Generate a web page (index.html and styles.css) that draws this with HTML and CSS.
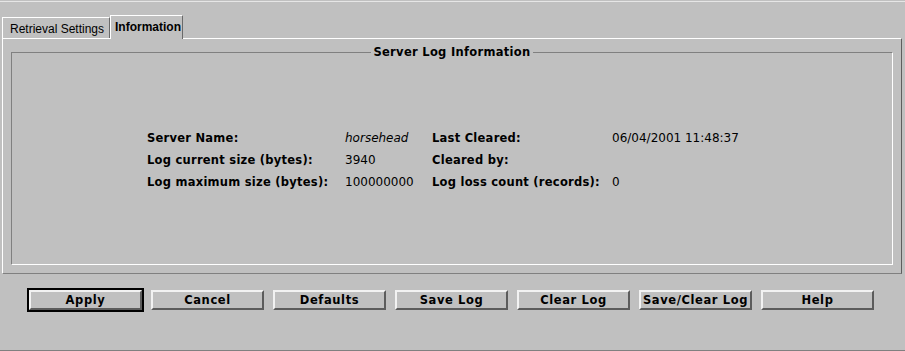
FILE: index.html
```html
<!DOCTYPE html>
<html lang="en">
<head>
  <meta charset="UTF-8" />
  <title>Server Log</title>
  <link rel="stylesheet" href="styles.css">
</head>
<body>
  <div class="window">
    <div class="tabs">
      <div class="tab">Retrieval Settings</div>
      <div class="tab active">Information</div>
    </div>

    <div class="panel">
      <fieldset class="group">
        <legend>Server Log Information</legend>
        <div class="info">
          <span class="label">Server Name:</span>
          <span class="value italic">horsehead</span>
          <span class="label">Last Cleared:</span>
          <span class="value">06/04/2001 11:48:37</span>

          <span class="label">Log current size (bytes):</span>
          <span class="value">3940</span>
          <span class="label">Cleared by:</span>
          <span class="value"></span>

          <span class="label">Log maximum size (bytes):</span>
          <span class="value">100000000</span>
          <span class="label">Log loss count (records):</span>
          <span class="value">0</span>
        </div>
      </fieldset>
    </div>

    <div class="buttons">
      <button class="default">Apply</button>
      <button>Cancel</button>
      <button>Defaults</button>
      <button>Save Log</button>
      <button>Clear Log</button>
      <button>Save/Clear Log</button>
      <button>Help</button>
    </div>
  </div>
</body>
</html>
```

FILE: styles.css
```css
* {
  box-sizing: border-box;
}

body {
  margin: 0;
  background: #c0c0c0;
  font-family: 'DejaVu Sans', Verdana, sans-serif;
  font-size: 12px;
  color: #000;
}

.window {
  width: 905px;
  height: 351px;
  padding-top: 1px;
  display: flex;
  flex-direction: column;
  border-bottom: 1px solid #808080;
}

.window::before {
  content: "";
  display: block;
  height: 1px;
  background: #e6e6e6;
}

.tabs {
  display: flex;
  align-items: flex-end;
  padding: 0 0 0 2px;
  height: 36px;
}

.tab {
  font-family: 'Liberation Sans', Arial, sans-serif;
  font-size: 12px;
  height: 21px;
  padding: 4px 0 0 7px;
  border-top: 1px solid #fff;
  border-left: 1px solid #fff;
  border-right: 1px solid #6a6a6a;
  width: 108px;
}

.tab.active {
  position: relative;
  z-index: 1;
  width: 73px;
  height: 24px;
  margin-bottom: -1px;
  padding: 4px 0 0 4px;
  font-weight: bold;
  background: #c0c0c0;
}

.panel {
  width: 900px;
  height: 236px;
  margin-left: 2px;
  padding: 6px 8px 8px 8px;
  border-top: 1px solid #fff;
  border-left: 1px solid #fff;
  border-right: 1px solid #5e5e5e;
  border-bottom: 1px solid #808080;
}

.group {
  margin: 0;
  height: 220px;
  padding: 68px 0 0 0;
  border-top: 1px solid #808080;
  border-left: 1px solid #808080;
  border-right: 1px solid #fff;
  border-bottom: 1px solid #fff;
}

.group legend {
  margin: 0 auto;
  padding: 0 2px;
  font-weight: bold;
  font-size: 11.5px;
  line-height: 14px;
  letter-spacing: 0.3px;
}

.info {
  display: grid;
  grid-template-columns: 198px 87px 180px auto;
  grid-auto-rows: 22px;
  align-items: center;
  margin-left: 135px;
}

.label {
  font-weight: bold;
  font-size: 11.5px;
  letter-spacing: 0.25px;
}

.value {
  font-size: 12px;
}

.italic {
  font-style: italic;
}

.buttons {
  display: flex;
  gap: 9px;
  padding: 16px 0 0 29px;
}

.buttons button {
  width: 113px;
  height: 20px;
  padding: 0;
  font-family: 'DejaVu Sans', Verdana, sans-serif;
  font-size: 11.5px;
  font-weight: bold;
  letter-spacing: 0.6px;
  color: #000;
  background: #c0c0c0;
  border: 2px solid;
  border-color: #f2f2f2 #5c5c5c #5c5c5c #f2f2f2;
}

.buttons button.default {
  outline: 2px solid #000;
}
```
